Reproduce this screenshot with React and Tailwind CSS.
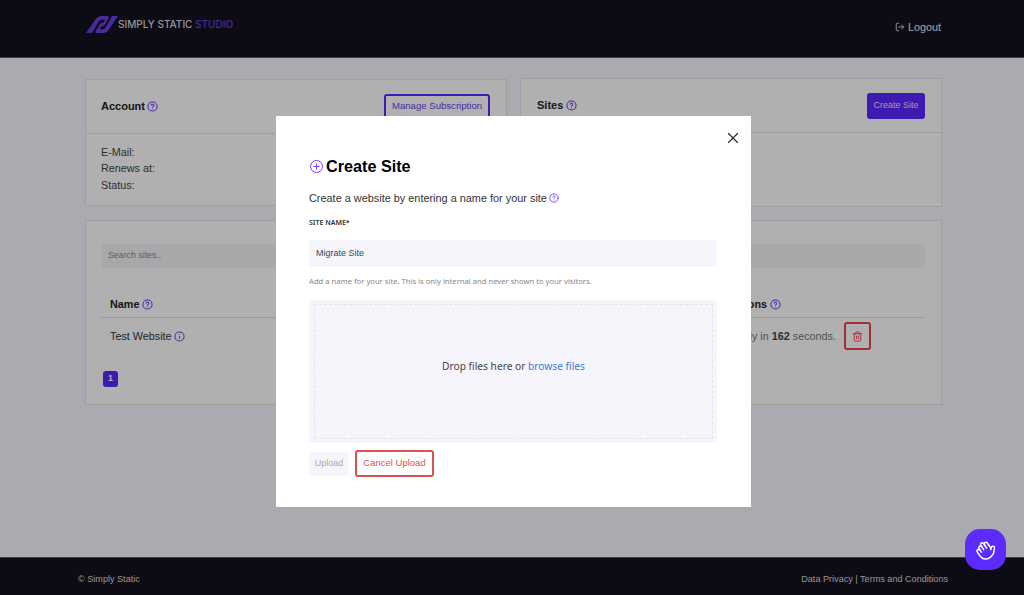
import React from "react";
import { X, LogOut, Trash2, Hand, Plus } from "lucide-react";

const Help = ({ className = "w-[11px] h-[11px] text-[#6d3bff]", label = "?" }) => (
  <svg viewBox="0 0 24 24" fill="none" stroke="currentColor" strokeWidth="2.3" strokeLinecap="round" strokeLinejoin="round" className={className}>
    <circle cx="12" cy="12" r="10" />
    {label === "?" ? (
      <>
        <path d="M9.1 9a3 3 0 0 1 5.8 1c0 2-3 3-3 3" />
        <path d="M12 17h.01" />
      </>
    ) : (
      <>
        <path d="M12 16v-4" />
        <path d="M12 8h.01" />
      </>
    )}
  </svg>
);

const Logo = () => (
  <svg viewBox="0 0 32 17" className="w-[32px] h-[17px] shrink-0" fill="#6a3de8">
    <path d="M0 17 L9.5 3.5 Q12 0 15.5 0 L21 0 Q24 0 22.5 2.5 L19 8 Q17.5 10 15.5 10 L12.5 10 L15 6.8 L17.2 6.8 L19 3.8 L15.5 3.8 Q14 3.8 13 5.2 L6 17 Z" />
    <path d="M32 0 L23 13.5 Q20.5 17 17 17 L11.5 17 Q8.5 17 10 14.5 L13.5 9 Q15 7 17 7 L20 7 L17.5 10.2 L15.3 10.2 L13.5 13.2 L17 13.2 Q18.5 13.2 19.5 11.8 L26 0 Z" />
  </svg>
);

export default function App() {
  return (
    <div className="relative min-h-[595px] h-[595px] overflow-hidden flex flex-col bg-[#f8f6ff] font-['Liberation_Sans',Arial,sans-serif] text-[#222]">
      <header className="h-[58px] shrink-0 bg-[#14121f] border-b border-[#5a5a60] flex justify-between pl-[86px] pr-[83px]">
        <div className="flex items-center h-[49px]">
          <Logo />
          <span className="font-['Inter',sans-serif] font-medium text-[10px] text-[#d8d8dc] whitespace-nowrap">
            SIMPLY STATIC <span className="text-[#6a3de8]">STUDIO</span>
          </span>
        </div>
        <div className="flex items-center gap-[3px] h-[54px] text-[#e8e8ec] text-[10.8px]">
          <LogOut className="w-[10px] h-[10px] -scale-x-100 rotate-180" strokeWidth={2} />
          <span>Logout</span>
        </div>
      </header>

      <main className="flex-1 px-[85px] pt-[20px] pr-[82px]">
        <div className="grid grid-cols-2 gap-[13px] items-start">
          <section className="mt-[1px] h-[127px] bg-white border border-[#e6e6ea]">
            <div className="h-[54px] flex items-center justify-between pl-[15px] pr-[16px] border-b border-[#e6e6ea]">
              <div className="flex items-center gap-[2px] text-[11px] font-bold">
                <span>Account</span>
                <Help />
              </div>
              <button className="h-[26px] w-[106px] rounded-[3px] border-2 border-[#5b26ff] text-[#6a3df0] text-[9.6px]">
                Manage Subscription
              </button>
            </div>
            <div className="pl-[15px] pt-[10px] text-[10.8px] leading-[16.4px] text-[#444]">
              <p>E-Mail:</p>
              <p>Renews at:</p>
              <p>Status:</p>
            </div>
          </section>
          <section className="h-[129px] bg-white border border-[#e6e6ea]">
            <div className="h-[54px] flex items-center justify-between pl-[16px] pr-[16px] border-b border-[#e6e6ea]">
              <div className="flex items-center gap-[3px] text-[11px] font-bold">
                <span>Sites</span>
                <Help />
              </div>
              <button className="h-[26px] w-[58px] rounded-[3px] bg-[#5b26ff] text-[#e6dfff] text-[9px]">
                Create Site
              </button>
            </div>
          </section>
        </div>

        <section className="mt-[13px] h-[185px] bg-white border border-[#e6e6ea] pl-[15px] pr-[16px] pt-[23px]">
          <div className="h-[24px] rounded-[3px] bg-[#f4f3f8] flex items-center px-[7px] text-[8.8px] text-[#888]">
            Search sites..
          </div>
          <div className="mt-[24px] h-[26px] flex items-center justify-between pl-[9px] pr-[144px] border-b border-[#dedee2] text-[10.8px] font-bold">
            <div className="flex items-center gap-[3px]">
              <span>Name</span>
              <Help />
            </div>
            <div className="flex items-center gap-[3px]">
              <span>Actions</span>
              <Help />
            </div>
          </div>
          <div className="h-[36px] flex items-center justify-between pl-[9px] pr-[54px] text-[10.8px]">
            <div className="flex items-center gap-[2px] text-[#333]">
              <span>Test Website</span>
              <Help label="i" />
            </div>
            <div className="flex items-center gap-[8px]">
              <span className="text-[#777]">
                Will be available only in <b className="text-[#444]">162</b> seconds.
              </span>
              <button className="w-[27px] h-[28px] rounded-[3px] border-2 border-[#f0434c] flex items-center justify-center">
                <Trash2 className="w-[11px] h-[11px] text-[#f0434c]" strokeWidth={2} />
              </button>
            </div>
          </div>
          <div className="mt-[17px] ml-[2px] w-[15px] h-[16px] rounded-[3px] bg-[#5b26ff] text-white text-[9px] font-bold flex items-center justify-center">
            1
          </div>
        </section>
      </main>

      <footer className="h-[38px] shrink-0 bg-[#14121f] border-t border-[#5a5a60] flex items-center justify-between pl-[78px] pr-[76px] pt-[6px] text-[9.1px] text-[#d8d8dc]">
        <span>© Simply Static</span>
        <span>Data Privacy | Terms and Conditions</span>
      </footer>

      <div className="absolute inset-0 bg-black/[0.31] flex justify-center items-start pt-[116px] pl-[3px]">
        <div className="relative w-[475px] h-[391px] bg-white pl-[33px] pr-[34px] pt-[41px]">
          <button className="absolute top-[13px] right-[9px] text-[#222]">
            <X className="w-[18px] h-[18px]" strokeWidth={1.5} />
          </button>
          <div className="flex items-center gap-[3px] h-[18px]">
            <span className="ml-[1px] w-[13px] h-[13px] rounded-full border-[1.5px] border-[#6d3bff] flex items-center justify-center text-[#6d3bff]">
              <Plus className="w-[9px] h-[9px]" strokeWidth={2.5} />
            </span>
            <h2 className="text-[16.2px] font-bold text-black">Create Site</h2>
          </div>
          <div className="mt-[16px] flex items-center gap-[2px] text-[10.9px] leading-[14px] text-[#333]">
            <span>Create a website by entering a name for your site</span>
            <Help className="w-[10px] h-[10px] text-[#7a4dff]" />
          </div>
          <label className="block mt-[13px] h-[10px] leading-[10px] font-['Noto_Sans',sans-serif] text-[7px] font-semibold text-[#333]">
            SITE NAME*
          </label>
          <div className="mt-[12px] h-[27px] rounded-[3px] bg-[#f6f5fc] flex items-center px-[7px] text-[9px] text-[#444]">
            Migrate Site
          </div>
          <p className="mt-[8px] h-[12px] leading-[12px] font-['Noto_Sans',sans-serif] text-[7.65px] text-[#888] whitespace-nowrap">
            Add a name for your site. This is only internal and never shown to your visitors.
          </p>
          <div className="mt-[13px] h-[143px] rounded-[4px] bg-[#f6f5fc] p-[4px] pl-[5px]">
            <div className="h-[135px] border border-dashed border-[#e4e4e8] flex items-center justify-center font-['Noto_Sans',sans-serif] text-[10.2px] text-[#444] pb-[10px]">
              <span>
                Drop files here or <span className="text-[#3a7bd5]">browse files</span>
              </span>
            </div>
          </div>
          <div className="mt-[7px] flex items-center gap-[6px]">
            <button className="w-[40px] h-[24px] rounded-[3px] bg-[#f6f5fc] text-[9px] text-[#aaa]">Upload</button>
            <button className="w-[79px] h-[27px] rounded-[3px] border-2 border-[#d9534f] text-[#d9534f] text-[9.5px]">
              Cancel Upload
            </button>
          </div>
        </div>
      </div>

      <button className="absolute top-[529px] left-[965px] w-[41px] h-[41px] rounded-[15px] bg-[#5b2bff] flex items-center justify-center text-white">
        <Hand className="w-[20px] h-[20px] -scale-x-100 -rotate-[35deg]" strokeWidth={1.8} />
      </button>
    </div>
  );
}
